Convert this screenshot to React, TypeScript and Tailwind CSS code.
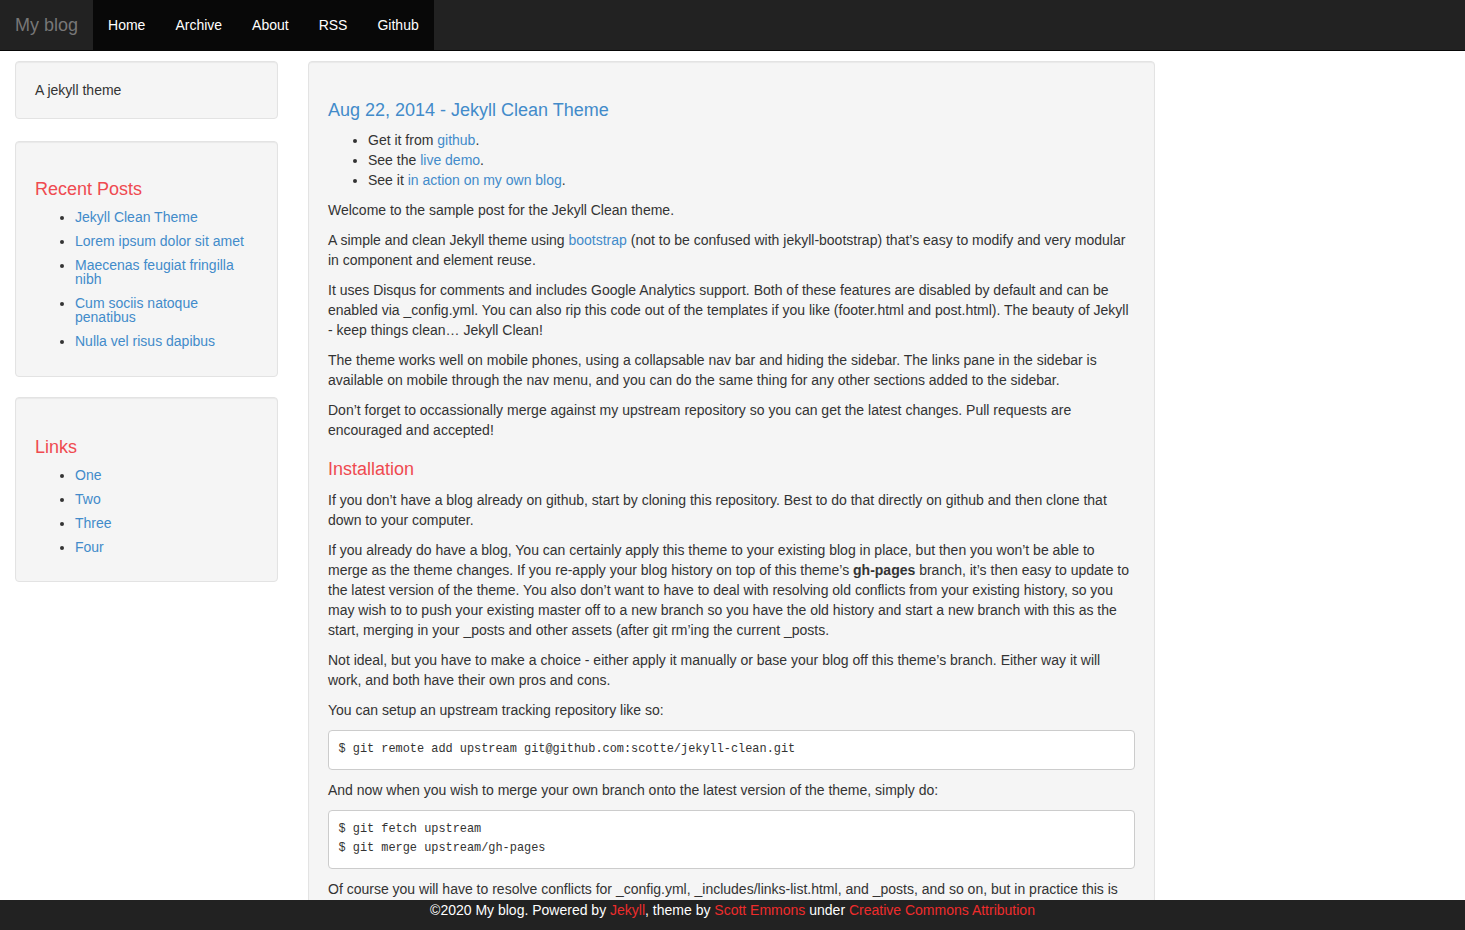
import React from 'react';

const NAV_ITEMS = ['Home', 'Archive', 'About', 'RSS', 'Github'];

const RECENT_POSTS = [
  'Jekyll Clean Theme',
  'Lorem ipsum dolor sit amet',
  'Maecenas feugiat fringilla nibh',
  'Cum sociis natoque penatibus',
  'Nulla vel risus dapibus',
];

const LINKS = ['One', 'Two', 'Three', 'Four'];

function A({ children }: { children: React.ReactNode }) {
  return <a href="#" className="text-[#428bca] hover:underline">{children}</a>;
}

function Well({ children, className = '' }: { children: React.ReactNode; className?: string }) {
  return (
    <div
      className={`bg-[#f5f5f5] border border-[#e3e3e3] rounded-[4px] px-[19px] shadow-[inset_0_1px_1px_rgba(0,0,0,0.05)] ${className}`}
    >
      {children}
    </div>
  );
}

function SideList({ title, items }: { title: string; items: string[] }) {
  return (
    <>
      <h3 className="text-[18px] leading-[19.8px] text-[#ef4a50] mt-[19px] mb-[10px]">{title}</h3>
      <ul className="list-disc pl-[40px] mb-[10px]">
        {items.map((item) => (
          <li key={item} className="leading-[14px] mb-[10px] pr-[10px]">
            <A>{item}</A>
          </li>
        ))}
      </ul>
    </>
  );
}

export default function App() {
  return (
    <div className="min-h-screen bg-white text-[14px] leading-[20px] text-[#333] font-['Liberation_Sans',Arial,sans-serif]">
      {/* Navbar */}
      <nav className="h-[51px] bg-[#222] border-b border-[#080808] flex">
        <a href="#" className="px-[15px] py-[15px] text-[18px] leading-[20px] text-[#777]">
          My blog
        </a>
        <ul className="flex bg-[#080808]">
          {NAV_ITEMS.map((item) => (
            <li key={item}>
              <a href="#" className="block px-[15px] py-[15px] text-white">
                {item}
              </a>
            </li>
          ))}
        </ul>
      </nav>

      <div className="flex gap-[30px] px-[15px] pt-[10px] pb-[40px]">
        {/* Sidebar */}
        <aside className="w-[263px] shrink-0">
          <Well className="py-[19px] leading-[18px] mb-[22px]">A jekyll theme</Well>
          <Well className="pt-[19px] pb-[18px] mb-[20px]">
            <SideList title="Recent Posts" items={RECENT_POSTS} />
          </Well>
          <Well className="pt-[21px] pb-[17px]">
            <SideList title="Links" items={LINKS} />
          </Well>
        </aside>

        {/* Post */}
        <main className="w-[847px] shrink-0">
          <Well className="pt-[19px] pb-[19px]">
            <h3 className="text-[18px] leading-[19.8px] mt-[20px] mb-[9px]">
              <A>Aug 22, 2014 - Jekyll Clean Theme</A>
            </h3>
            <ul className="list-disc pl-[40px] mb-[10px]">
              <li>
                Get it from <A>github</A>.
              </li>
              <li>
                See the <A>live demo</A>.
              </li>
              <li>
                See it <A>in action on my own blog</A>.
              </li>
            </ul>
            <p className="mb-[10px]">Welcome to the sample post for the Jekyll Clean theme.</p>
            <p className="mb-[10px]">
              A simple and clean Jekyll theme using <A>bootstrap</A> (not to be confused with jekyll-bootstrap)
              that’s easy to modify and very modular in component and element reuse.
            </p>
            <p className="mb-[10px]">
              It uses Disqus for comments and includes Google Analytics support. Both of these features are
              disabled by default and can be enabled via _config.yml. You can also rip this code out of the
              templates if you like (footer.html and post.html). The beauty of Jekyll - keep things clean… Jekyll
              Clean!
            </p>
            <p className="mb-[10px]">
              The theme works well on mobile phones, using a collapsable nav bar and hiding the sidebar. The links
              pane in the sidebar is available on mobile through the nav menu, and you can do the same thing for
              any other sections added to the sidebar.
            </p>
            <p className="mb-[10px]">
              Don’t forget to occassionally merge against my upstream repository so you can get the latest
              changes. Pull requests are encouraged and accepted!
            </p>

            <h3 className="text-[18px] leading-[19.8px] text-[#ef4a50] mt-[20px] mb-[10px]">Installation</h3>
            <p className="mb-[10px]">
              If you don’t have a blog already on github, start by cloning this repository. Best to do that
              directly on github and then clone that down to your computer.
            </p>
            <p className="mb-[10px]">
              If you already do have a blog, You can certainly apply this theme to your existing blog in place,
              but then you won’t be able to merge as the theme changes. If you re-apply your blog history on top
              of this theme’s <strong>gh-pages</strong> branch, it’s then easy to update to the latest version of
              the theme. You also don’t want to have to deal with resolving old conflicts from your existing
              history, so you may wish to to push your existing master off to a new branch so you have the old
              history and start a new branch with this as the start, merging in your _posts and other assets
              (after git rm’ing the current _posts.
            </p>
            <p className="mb-[10px]">
              Not ideal, but you have to make a choice - either apply it manually or base your blog off this
              theme’s branch. Either way it will work, and both have their own pros and cons.
            </p>
            <p className="mb-[10px]">You can setup an upstream tracking repository like so:</p>
            <pre className="bg-white border border-[#ccc] rounded-[4px] px-[9.5px] py-[9.5px] mb-[10px] text-[11.9px] leading-[19px] font-['Liberation_Mono',Consolas,monospace] text-[#333]">
              $ git remote add upstream git@github.com:scotte/jekyll-clean.git
            </pre>
            <p className="mb-[10px]">
              And now when you wish to merge your own branch onto the latest version of the theme, simply do:
            </p>
            <pre className="bg-white border border-[#ccc] rounded-[4px] px-[9.5px] py-[9.5px] mb-[10px] text-[11.9px] leading-[19px] font-['Liberation_Mono',Consolas,monospace] text-[#333]">
              {'$ git fetch upstream\n$ git merge upstream/gh-pages'}
            </pre>
            <p className="mb-[10px]">
              Of course you will have to resolve conflicts for _config.yml, _includes/links-list.html, and
              _posts, and so on, but in practice this is pretty minor.
            </p>
            <p className="mb-[10px]">
              This is only the second time I’ve built a Jekyll site and I’ve found it a great tool. I hope this
              theme helps you get started on your own blog.
            </p>
          </Well>
        </main>
      </div>

      {/* Footer */}
      <footer className="fixed bottom-0 left-0 right-0 h-[30px] bg-[#222] text-white text-center leading-[20px]">
        ©2020 My blog. Powered by <a href="#" className="text-[#ee2c2c]">Jekyll</a>, theme by{' '}
        <a href="#" className="text-[#ee2c2c]">Scott Emmons</a> under{' '}
        <a href="#" className="text-[#ee2c2c]">Creative Commons Attribution</a>
      </footer>
    </div>
  );
}
